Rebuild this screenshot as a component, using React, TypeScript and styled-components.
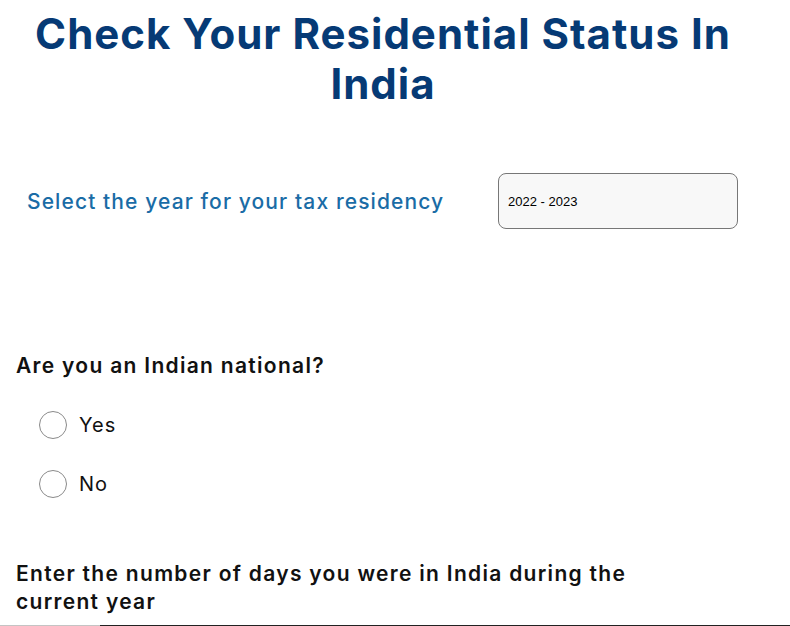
import React, { useState } from 'react';
import styled, { createGlobalStyle } from 'styled-components';

const GlobalStyle = createGlobalStyle`
  html, body {
    margin: 0;
    padding: 0;
    background: #ffffff;
  }
  body {
    font-family: Inter, "Open Sans", sans-serif;
    overflow: hidden;
  }
`;

const Page = styled.div`
  width: 790px;
  height: 626px;
  overflow: hidden;
  position: relative;
`;

const Title = styled.h1`
  margin: 9px 0 0 0;
  width: 766px;
  text-align: center;
  font-family: Inter, "Open Sans", sans-serif;
  font-weight: 700;
  font-size: 42px;
  line-height: 50px;
  color: #063a75;
  letter-spacing: 1px;
`;

const YearRow = styled.div`
  display: grid;
  grid-template-columns: 471px 240px;
  align-items: center;
  margin-top: 64px;
  padding-left: 27px;
`;

const YearLabel = styled.label`
  font-size: 21px;
  font-weight: 500;
  color: #1a6ca6;
  letter-spacing: 1.1px;
`;

const YearSelect = styled.div`
  box-sizing: border-box;
  height: 56px;
  border: 1px solid #777777;
  border-radius: 8px;
  background: #f8f8f8;
  display: flex;
  align-items: center;
  padding-left: 9px;
  font-family: "Liberation Sans", Arial, sans-serif;
  font-size: 13px;
  color: #000;
`;

const Question = styled.div`
  padding: 0 16px;
  font-size: 21px;
  font-weight: 600;
  color: #111111;
  line-height: 28px;
  letter-spacing: 1.3px;
  max-width: 640px;
`;

const NationalQuestion = styled(Question)`
  margin-top: 123px;
`;

const DaysQuestion = styled(Question)`
  margin-top: 62px;
`;

const Options = styled.div`
  display: flex;
  flex-direction: column;
  gap: 31px;
  padding-left: 39px;
  margin-top: 31px;
`;

const Option = styled.label`
  display: flex;
  align-items: center;
  gap: 12px;
  font-size: 20px;
  color: #111;
  letter-spacing: 1px;
  cursor: pointer;
`;

const RadioCircle = styled.span<{ $checked: boolean }>`
  box-sizing: border-box;
  width: 28px;
  height: 28px;
  border-radius: 50%;
  border: 1px solid #8a8a8a;
  background: #fff;
  display: flex;
  align-items: center;
  justify-content: center;
  &::after {
    content: '';
    width: 14px;
    height: 14px;
    border-radius: 50%;
    background: #063a75;
    display: ${(p) => (p.$checked ? 'block' : 'none')};
  }
`;

const DaysTrack = styled.div`
  position: absolute;
  left: 0;
  right: 0;
  bottom: 0;
  height: 1px;
  display: grid;
  grid-template-columns: 100px 1fr;
`;

const TrackPart = styled.div<{ $dark?: boolean }>`
  background: ${(p) => (p.$dark ? '#222222' : '#c4c4c4')};
`;

const App: React.FC = () => {
  const [national, setNational] = useState<string | null>(null);

  return (
    <Page>
      <GlobalStyle />
      <Title>Check Your Residential Status In India</Title>
      <YearRow>
        <YearLabel>Select the year for your tax residency</YearLabel>
        <YearSelect>2022 - 2023</YearSelect>
      </YearRow>
      <NationalQuestion>Are you an Indian national?</NationalQuestion>
      <Options>
        {['Yes', 'No'].map((opt) => (
          <Option key={opt} onClick={() => setNational(opt)}>
            <RadioCircle $checked={national === opt} />
            {opt}
          </Option>
        ))}
      </Options>
      <DaysQuestion>Enter the number of days you were in India during the current year</DaysQuestion>
      <DaysTrack>
        <TrackPart />
        <TrackPart $dark />
      </DaysTrack>
    </Page>
  );
};

export default App;
